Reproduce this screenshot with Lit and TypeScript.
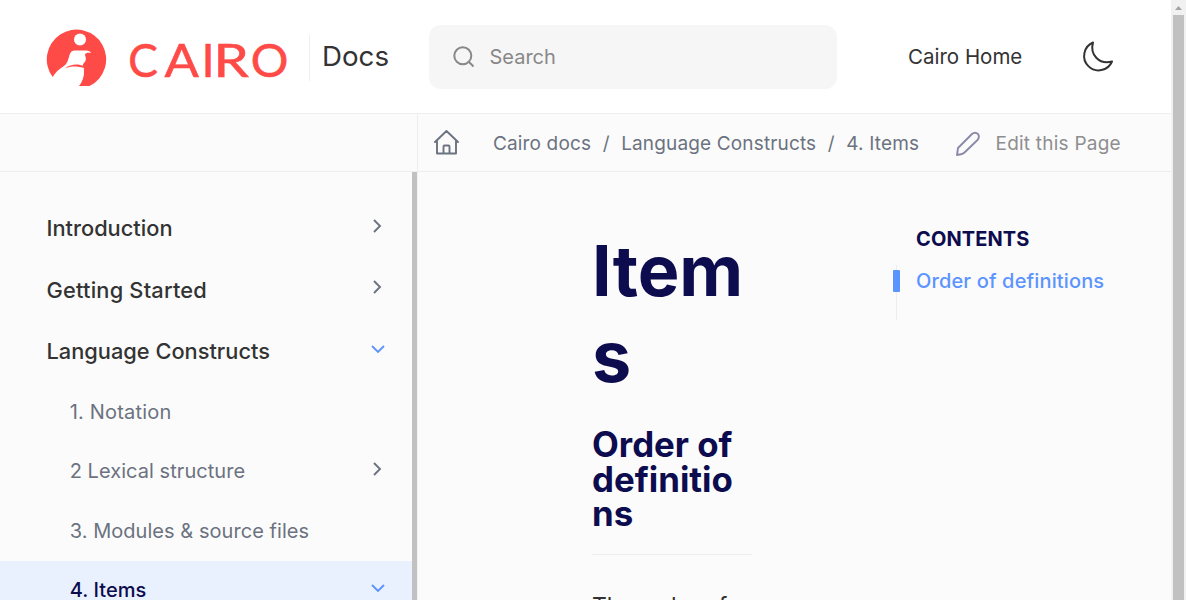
import { LitElement, html, css, svg } from "lit";
import { customElement } from "lit/decorators.js";

const NAV = [
  { label: "Introduction", level: 1, state: "closed" },
  { label: "Getting Started", level: 1, state: "closed", wide: true },
  { label: "Language Constructs", level: 1, state: "open" },
  { label: "1. Notation", level: 2, state: "leaf", wide: true },
  { label: "2 Lexical structure", level: 2, state: "closed" },
  { label: "3. Modules & source files", level: 2, state: "leaf" },
  { label: "4. Items", level: 2, state: "open", current: true },
];

@customElement("app-root")
export class AppRoot extends LitElement {
  static styles = css`
    :host { display: block; height: 600px; overflow: hidden; font-family: Inter, sans-serif; color: #333; background: #fbfbfb; }
    * { box-sizing: border-box; }
    .page { display: grid; grid-template-columns: 1171px 15px; height: 600px; }
    .main { display: grid; grid-template-rows: 114px 58px 428px; }
    .header { display: flex; align-items: flex-start; background: #fff; border-bottom: 1px solid #eeeeee; }
    .brand { display: flex; align-items: flex-start; padding-left: 46px; }
    .logo { display: block; margin-top: 28px; width: 244px; height: 60px; flex: none; }
    .mark-word { font-family: Lato, sans-serif; font-size: 47px; fill: #ff4b47; stroke: #ff4b47; stroke-width: 0.6; }
    .product { margin: 35px 0 0 19px; height: 46px; border-left: 1px solid #eeeeee; padding-left: 12px; width: 120px; font-size: 27.7px; line-height: 43px; white-space: nowrap; }
    .search { display: flex; align-items: center; margin-top: 25px; width: 408px; height: 64px; border-radius: 12px; background: #f6f6f6; color: #888; font-size: 20px; padding-left: 24px; gap: 14.5px; }
    .home-link { margin: 42px 0 0 71px; font-size: 20.5px; line-height: 30px; width: 174px; white-space: nowrap; }
    .moon { margin: 40px 0 0 -1px; display: block; }
    .toolbar { display: grid; grid-template-columns: 417px 1fr; border-bottom: 1px solid #eeeeee; }
    .crumbs { display: flex; align-items: center; border-left: 1px solid #eeeeee; padding-left: 15px; color: #6b7280; font-size: 19px; letter-spacing: 0.15px; white-space: nowrap; }
    .crumb-list { display: flex; margin-left: 32px; width: 462px; padding-top: 2px; }
    .sep { margin: 0 11.5px; }
    .edit { color: #8e8e8e; margin-left: 14.5px; padding-top: 2px; letter-spacing: 0.23px; }
    .body { display: grid; grid-template-columns: 412px 5px 1fr; overflow: hidden; }
    .nav { padding-top: 25.5px; overflow: hidden; }
    .item { display: flex; justify-content: space-between; align-items: center; padding-right: 26px; white-space: nowrap; }
    .l1 { height: 61.5px; padding-left: 46.5px; font-size: 21.8px; font-weight: 500; color: #333; }
    .l2 { height: 59.5px; padding-left: 69.7px; font-size: 20px; color: #6b7280; letter-spacing: 0.05px; }
    .wide { letter-spacing: 0.2px; }
    .current { background: #e9f1ff; color: #0c0c4f; font-weight: 500; }
    .chev { display: block; margin-top: -5px; }
    .nav-bar { background: #c1c1c1; }
    .content { display: flex; border-left: 1px solid #f2f2f2; overflow: hidden; }
    .article { width: 160px; margin-left: 174px; color: #0c0c4f; overflow-wrap: anywhere; }
    .title { margin: 56px 0 0; font-size: 70px; line-height: 85.5px; font-weight: 700; }
    .sub { margin: 28px 0 0; padding-bottom: 23px; border-bottom: 1px solid #eeeeee; font-size: 34.8px; line-height: 34.5px; font-weight: 700; }
    .para { margin: 34px 0 0; color: #333; font-size: 23px; line-height: 34px; white-space: nowrap; }
    .toc { margin: 53px 0 0 141px; }
    .toc-title { padding-left: 23px; font-size: 20px; line-height: 28px; font-weight: 700; color: #0c0c4f; letter-spacing: 0.1px; }
    .toc-list { margin: 12px 0 0 3px; border-left: 1px solid #eeeeee; height: 55px; }
    .toc-item { display: flex; padding-top: 5px; margin-left: -4px; align-items: flex-start; gap: 16px; color: #5c94ff; font-size: 20px; line-height: 22px; font-weight: 500; letter-spacing: 0.14px; white-space: nowrap; }
    .tick { width: 7px; height: 22px; border-radius: 1px; background: #5c94ff; }
    .scroll { background: #f1f1f1; display: flex; flex-direction: column; align-items: center; }
    .arrow { display: block; height: 15px; width: 15px; }
    .thumb { width: 11px; flex: 1; background: #c1c1c1; }
  `;

  private chevron(state: string) {
    if (state === "leaf") return null;
    const open = state === "open";
    return html`<svg class="chev" width="16" height="16" viewBox="0 0 16 16" fill="none" stroke=${open ? "#5c94ff" : "#6b7280"} stroke-width="1.9">
      ${open ? svg`<path d="M2 5L8 11L14 5"/>` : svg`<path d="M4 2L10 8L4 14"/>`}
    </svg>`;
  }

  render() {
    return html`
      <div class="page">
        <div class="main">
          <header class="header">
            <div class="brand">
              <svg class="logo" viewBox="0 0 244 60">
                <path fill="#ff4b47" d="M6.700 49.100A29.700 29.700 0 1 1 43.500 58H32.300C36.500 53.500 38.500 48 37.500 38.300C31 35.500 24 37 19.500 39.500L20 44Z"/>
                <path fill="#fff" d="M6.200 50.300C8.500 45 13 41 18 38C21.500 35.500 21.500 33 23 29C24 24.500 25.500 22.500 29 22.500H40C43 22.500 44.500 23.500 45 25C42.500 24.500 39 24.500 39 27C40.500 31 40 33 37.500 35.500C36.500 36.500 37 37.500 37.500 40C38.700 47 37 53 32.300 59H6Z"/>
                <path fill="#ff4b47" d="M18.800 40.300C25 36 32 35.500 38 38.300L37.800 40C31 37.800 25 38 18.800 40.300Z"/>
                <circle cx="34" cy="11.500" r="6" fill="#fff"/>
                <text class="mark-word" transform="translate(82.300 48.500) scale(0.94 1)">C</text>
                <text class="mark-word" transform="translate(118.500 48.500) scale(1.080 1)">A</text>
                <text class="mark-word" x="155.500" y="48.500">I</text>
                <text class="mark-word" transform="translate(167.500 48.500) scale(1.200 1)">R</text>
                <text class="mark-word" transform="translate(204.800 48.500)">O</text>
              </svg>
              <div class="product">Docs</div>
            </div>
            <div class="search">
              <svg width="22" height="22" viewBox="0 0 22 22" fill="none" stroke="#888" stroke-width="2"><circle cx="9.8" cy="9.8" r="8.5"/><path d="M16 16L20.500 20.500"/></svg>
              <span>Search</span>
            </div>
            <div class="home-link">Cairo Home</div>
            <svg class="moon" width="33" height="34" viewBox="0 0 33 34" fill="none" stroke="#333" stroke-width="2" stroke-linejoin="round"><path d="M12 2.500A14.500 14.500 0 1 0 31 21.500C18.500 25 8.500 15 12 2.500Z"/></svg>
          </header>
          <div class="toolbar">
            <div></div>
            <div class="crumbs">
              <svg width="28" height="28" viewBox="0 0 28 28" fill="none" stroke="#6b7280" stroke-width="1.9" stroke-linejoin="round" stroke-linecap="round"><path d="M2 13L13.500 2L25 13M4 11.500V24.500H23V11.500M10.500 24.500V17.500Q10.500 16.500 11.500 16.500H15.500Q16.500 16.500 16.500 17.500V24.500"/></svg>
              <div class="crumb-list"><span>Cairo docs</span><span class="sep">/</span><span>Language Constructs</span><span class="sep">/</span><span>4. Items</span></div>
              <svg width="26" height="26" viewBox="0 0 26 26" fill="none" stroke="#8a8aa8" stroke-width="1.9" stroke-linejoin="round"><path d="M2 25L3 18L17 4Q20 1.500 23 4Q25 7 22.500 10L9.500 22.500Q8 24 6 24.300Z"/></svg>
              <span class="edit">Edit this Page</span>
            </div>
          </div>
          <div class="body">
            <nav class="nav">
              ${NAV.map((n) => html`<div class="item l${n.level} ${n.current ? "current" : ""} ${n.wide ? "wide" : ""}"><span>${n.label}</span>${this.chevron(n.state)}</div>`)}
            </nav>
            <div class="nav-bar"></div>
            <div class="content">
              <article class="article">
                <h1 class="title">Items</h1>
                <h2 class="sub">Order of definitions</h2>
                <p class="para">The order of</p>
              </article>
              <aside class="toc">
                <div class="toc-title">CONTENTS</div>
                <div class="toc-list"><div class="toc-item"><span class="tick"></span><span>Order of definitions</span></div></div>
              </aside>
            </div>
          </div>
        </div>
        <div class="scroll">
          <svg class="arrow" viewBox="0 0 15 15"><path fill="#a3a3a3" d="M4 10L7.500 6L11 10Z"/></svg>
          <div class="thumb"></div>
        </div>
      </div>`;
  }
}
